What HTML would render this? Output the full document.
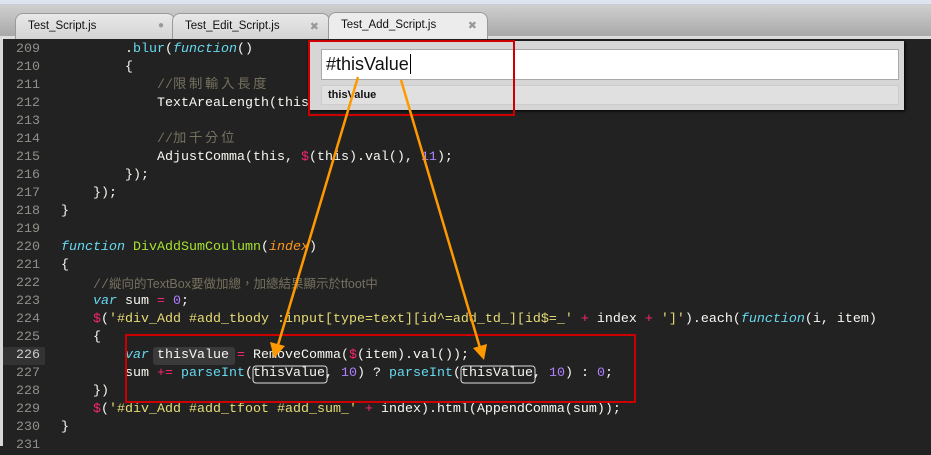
<!DOCTYPE html>
<html><head><meta charset="utf-8">
<style>
*{margin:0;padding:0;box-sizing:border-box}
body{width:931px;height:446px;overflow:hidden;background:#222;position:relative;font-family:"Liberation Sans","Noto Sans CJK TC",sans-serif}
#top{position:absolute;left:0;top:0;width:931px;height:5px;background:#dde3f0;border-bottom:1px solid #c8cdd8}
#tabbar{position:absolute;left:0;top:5px;width:931px;height:34px;background:linear-gradient(#cfcfcf,#a9a9a9);border-bottom:3px solid #ddd}
.tab{position:absolute;top:8px;height:26px;background:linear-gradient(#e8e8e8,#d4d4d4);border:1px solid #9a9a9a;border-bottom:none;border-radius:8px 8px 0 0;font-size:11.5px;color:#111;padding:6px 0 0 12px}
.tab.act{background:#ececec;top:7px;height:28px}
.tab .x{position:absolute;right:10px;top:6px;color:#999;font-size:11px}
#ed{position:absolute;left:0;top:39px;width:931px;height:407px;background:#222;border-left:3px solid #d8d8d8}
.ln{position:absolute;left:0;width:40px;text-align:right;color:#8f908a;font:13.33px/18px "Liberation Mono","Noto Sans CJK TC",monospace;margin-top:2px}
.cd{position:absolute;left:61px;white-space:pre;color:#f8f8f2;font:13.33px/18px "Liberation Mono","Noto Sans CJK TC",monospace;margin-top:2px}
.k{color:#66d9ef;font-style:italic}.g{color:#a6e22e}.p{color:#f92672}.n{color:#ae81ff}.s{color:#e6db74}.c{color:#75715e}.o{color:#fd971f;font-style:italic}.b{color:#66d9ef}
.cj{letter-spacing:2.7px}
#panel{position:absolute;left:308px;top:41px;width:596px;height:69px;background:#d6d6d6;box-shadow:1px 1px 3px #000}
#inp{position:absolute;left:13px;top:8px;width:578px;height:31px;background:#fff;border:1px solid #aaa;font-size:18px;color:#111;padding:4px 0 0 4px}
#row{position:absolute;left:13px;top:44px;width:578px;height:20px;background:#e0e0e0;border:1px solid #ccc;font-size:11px;font-weight:bold;color:#111;padding:3px 0 0 6px}
</style></head><body>
<div id="top"></div>
<div id="tabbar">
<div class="tab" style="left:15px;width:160px">Test_Script.js<span class="x" style="font-size:10px">●</span></div>
<div class="tab" style="left:172px;width:158px">Test_Edit_Script.js<span class="x">✖</span></div>
<div class="tab act" style="left:328px;width:160px">Test_Add_Script.js<span class="x">✖</span></div>
</div>
<div id="ed"></div>
<div style="position:absolute;left:3px;top:347px;width:42px;height:18px;background:#333"></div>
<div style="position:absolute;left:153px;top:347px;width:82px;height:18px;background:#3a3a3a;border-radius:3px"></div>
<div class="ln" style="top:39px">209</div><div class="cd" style="top:39px">        .<span class="b">blur</span>(<span class="k">function</span>()</div>
<div class="ln" style="top:57px">210</div><div class="cd" style="top:57px">        {</div>
<div class="ln" style="top:75px">211</div><div class="cd" style="top:75px">            <span class="c">//<span class="cj">限制輸入長度</span></span></div>
<div class="ln" style="top:93px">212</div><div class="cd" style="top:93px">            TextAreaLength(this, <span class="n">50</span>);</div>
<div class="ln" style="top:111px">213</div>
<div class="ln" style="top:129px">214</div><div class="cd" style="top:129px">            <span class="c">//<span class="cj">加千分位</span></span></div>
<div class="ln" style="top:147px">215</div><div class="cd" style="top:147px">            AdjustComma(this, <span class="p">$</span>(this).val(), <span class="n">11</span>);</div>
<div class="ln" style="top:165px">216</div><div class="cd" style="top:165px">        });</div>
<div class="ln" style="top:183px">217</div><div class="cd" style="top:183px">    });</div>
<div class="ln" style="top:201px">218</div><div class="cd" style="top:201px">}</div>
<div class="ln" style="top:219px">219</div>
<div class="ln" style="top:237px">220</div><div class="cd" style="top:237px"><span class="k">function</span> <span class="g">DivAddSumCoulumn</span>(<span class="o">index</span>)</div>
<div class="ln" style="top:255px">221</div><div class="cd" style="top:255px">{</div>
<div class="ln" style="top:273px">222</div><div class="cd" style="top:273px">    <span class="c">//<span style="font-family:'Liberation Sans','Noto Sans CJK TC',sans-serif;font-size:12.5px">縱向的TextBox要做加總，加總結果顯示於tfoot中</span></span></div>
<div class="ln" style="top:291px">223</div><div class="cd" style="top:291px">    <span class="k">var</span> sum <span class="p">=</span> <span class="n">0</span>;</div>
<div class="ln" style="top:309px">224</div><div class="cd" style="top:309px">    <span class="p">$</span>(<span class="s">'#div_Add #add_tbody :input[type=text][id^=add_td_][id$=_'</span> <span class="p">+</span> index <span class="p">+</span> <span class="s">']'</span>).each(<span class="k">function</span>(i, item)</div>
<div class="ln" style="top:327px">225</div><div class="cd" style="top:327px">    {</div>
<div class="ln" style="top:345px;color:#ccc">226</div><div class="cd" style="top:345px">        <span class="k">var</span> thisValue <span class="p">=</span> RemoveComma(<span class="p">$</span>(item).val());</div>
<div class="ln" style="top:363px">227</div><div class="cd" style="top:363px">        sum <span class="p">+=</span> <span class="b">parseInt</span>(thisValue, <span class="n">10</span>) ? <span class="b">parseInt</span>(thisValue, <span class="n">10</span>) : <span class="n">0</span>;</div>
<div class="ln" style="top:381px">228</div><div class="cd" style="top:381px">    })</div>
<div class="ln" style="top:399px">229</div><div class="cd" style="top:399px">    <span class="p">$</span>(<span class="s">'#div_Add #add_tfoot #add_sum_'</span> <span class="p">+</span> index).html(AppendComma(sum));</div>
<div class="ln" style="top:417px">230</div><div class="cd" style="top:417px">}</div>
<div class="ln" style="top:435px">231</div>
<div id="panel"><div id="inp">#thisValue<span style="border-left:1px solid #000;margin-left:1px"></span></div><div id="row">thisValue</div></div>
<svg width="931" height="446" style="position:absolute;left:0;top:0">
<rect x="309" y="41" width="205" height="74" fill="none" stroke="#c00" stroke-width="2"/>
<rect x="126" y="335" width="509" height="67" fill="none" stroke="#c00" stroke-width="2"/>
<rect x="253" y="366" width="74" height="17" rx="3" fill="none" stroke="#ddd" stroke-width="1"/>
<rect x="461" y="366" width="74" height="17" rx="3" fill="none" stroke="#ddd" stroke-width="1"/>
<g stroke="#f90" stroke-width="2.5" fill="#f90">
<line x1="358" y1="77" x2="278" y2="345"/>
<line x1="401" y1="80" x2="480" y2="348"/>
<polygon points="274,358 270,342 285,346" stroke="none"/>
<polygon points="484,360 473,348 487,344" stroke="none"/>
</g>
</svg>
</body></html>
